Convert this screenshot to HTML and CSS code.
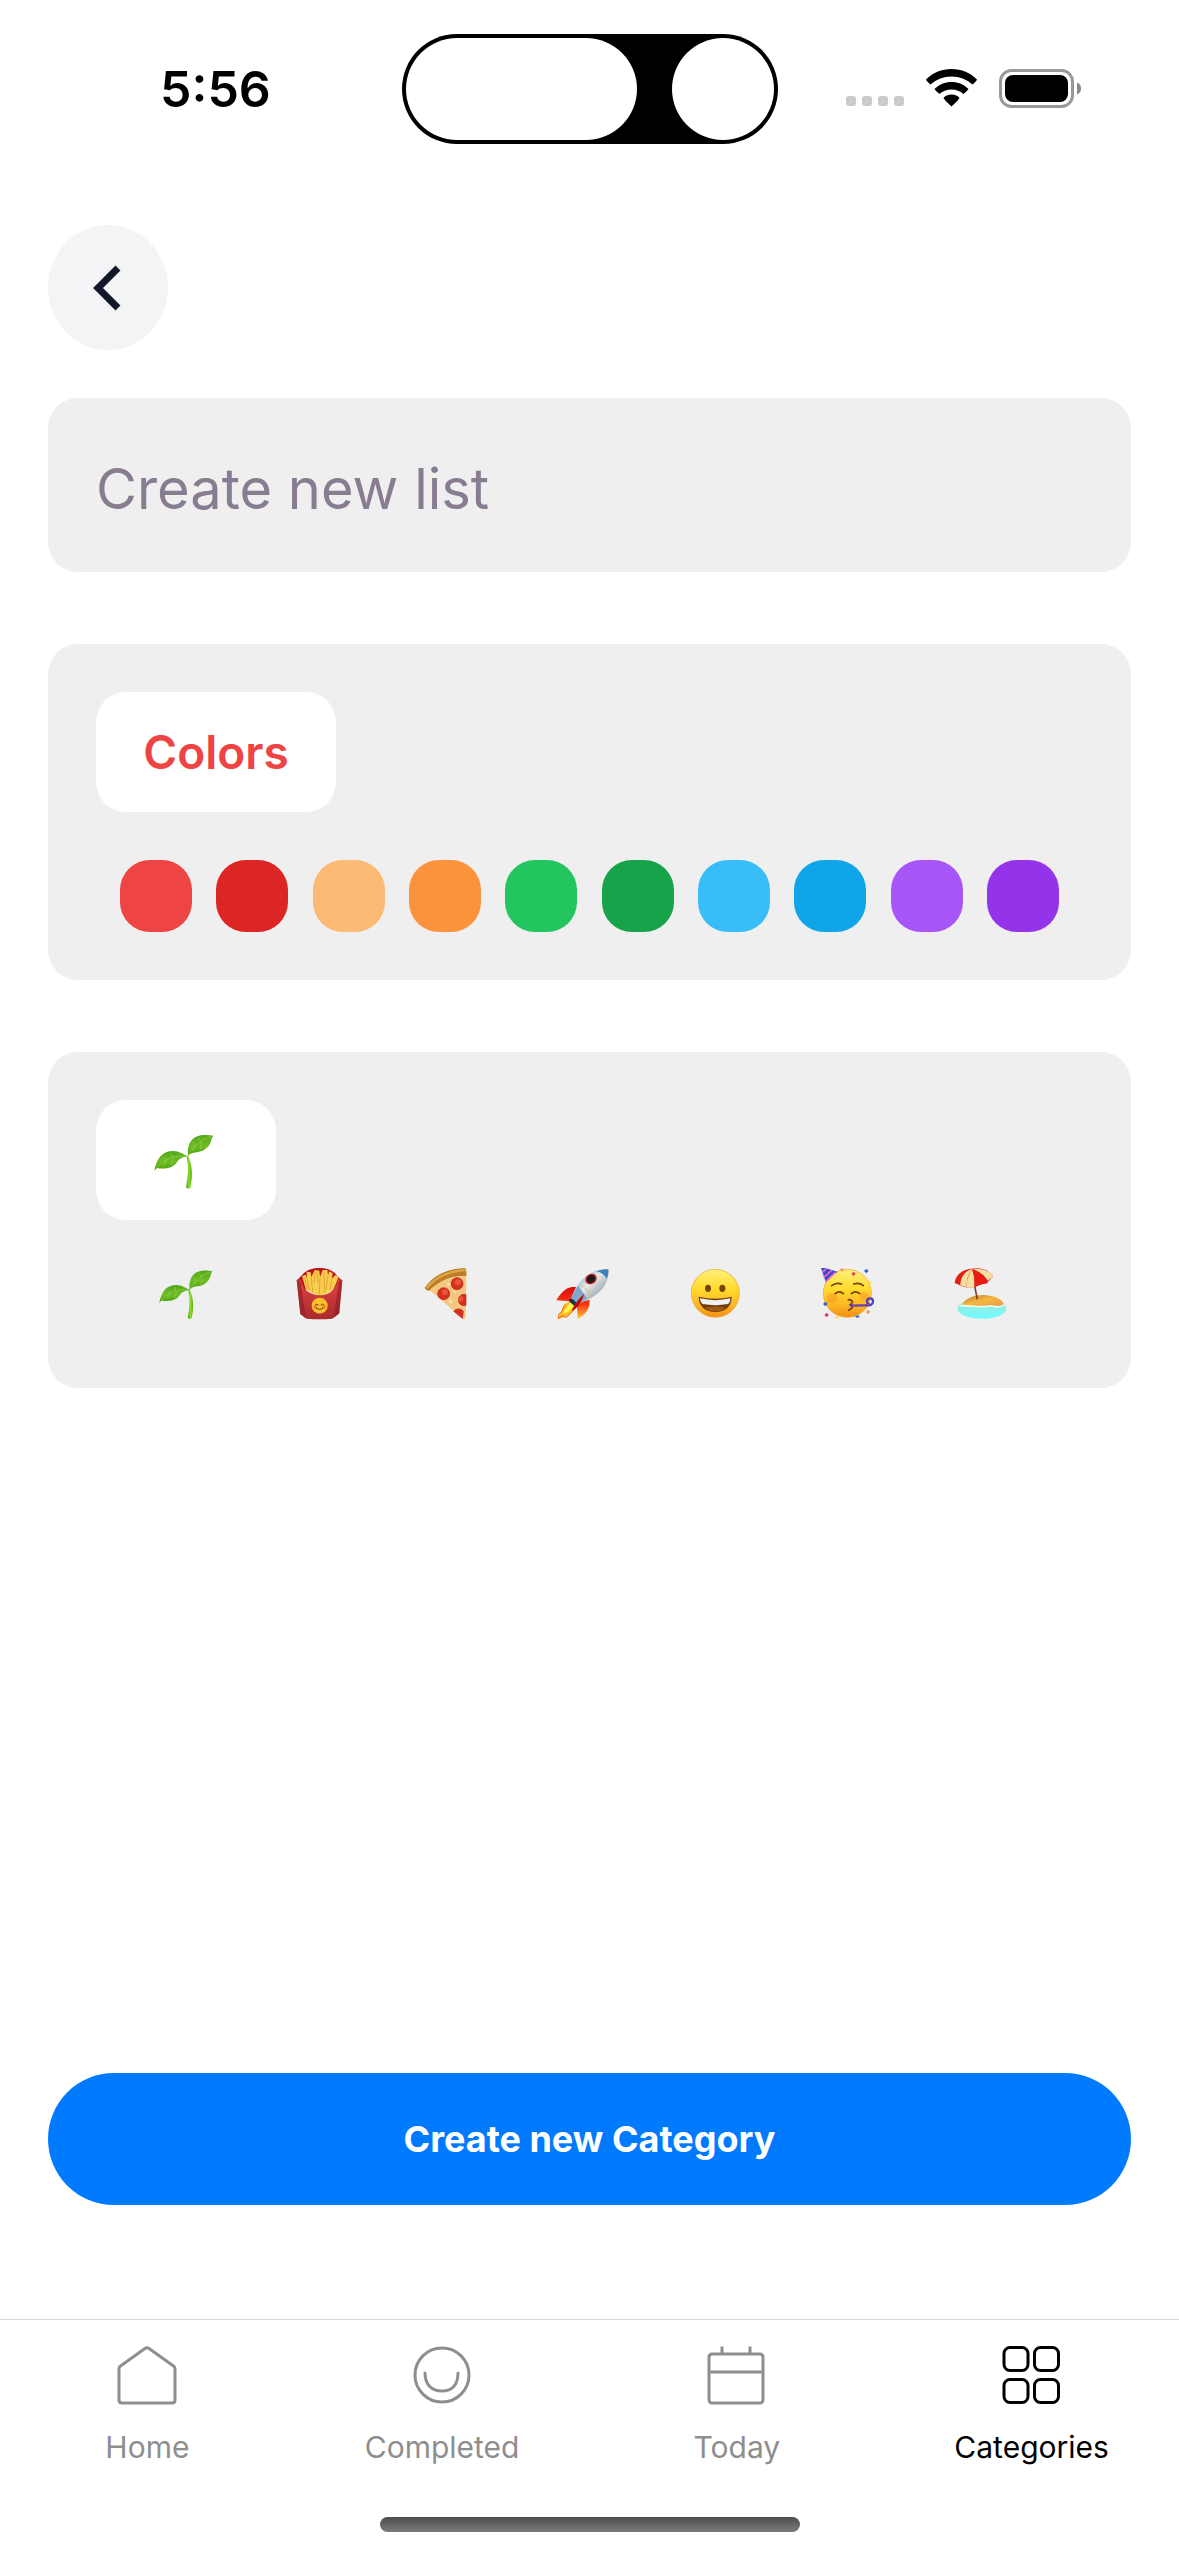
FILE: index.html
```html
<!DOCTYPE html>
<html lang="en">
<head>
<meta charset="utf-8">
<meta name="viewport" content="width=device-width, initial-scale=1">
<title>Create new Category</title>
<link rel="stylesheet" href="styles.css">
</head>
<body>
<svg class="defs" width="0" height="0" aria-hidden="true">
  <defs>
    <linearGradient id="leaf" x1="0" y1="0" x2="0" y2="1"><stop offset="0" stop-color="#55a81c"/><stop offset=".55" stop-color="#6dbd22"/><stop offset="1" stop-color="#48990f"/></linearGradient>
    <linearGradient id="stem" x1="0" y1="0" x2="1" y2="0"><stop offset="0" stop-color="#4f9f0c"/><stop offset=".5" stop-color="#8add2a"/><stop offset="1" stop-color="#58ae12"/></linearGradient>
    <linearGradient id="face" x1="0" y1="0" x2="0" y2="1"><stop offset="0" stop-color="#fff07c"/><stop offset=".4" stop-color="#ffdc2e"/><stop offset=".75" stop-color="#fdb622"/><stop offset="1" stop-color="#f08f12"/></linearGradient>
    <linearGradient id="box" x1="0" y1="0" x2="0" y2="1"><stop offset="0" stop-color="#e04444"/><stop offset="1" stop-color="#a92a2e"/></linearGradient>
    <linearGradient id="hull" x1="0" y1="0" x2="1" y2="1"><stop offset="0" stop-color="#4f8fc6"/><stop offset=".45" stop-color="#e6e9e8"/><stop offset=".7" stop-color="#a9b3b8"/><stop offset="1" stop-color="#3f6c96"/></linearGradient>
    <linearGradient id="fin" x1="0" y1="0" x2="0" y2="1"><stop offset="0" stop-color="#d80f0a"/><stop offset=".55" stop-color="#f93714"/><stop offset="1" stop-color="#ffd23a"/></linearGradient>
    <linearGradient id="sand" x1="0" y1="0" x2="1" y2="1"><stop offset="0" stop-color="#b5793a"/><stop offset=".5" stop-color="#f6b83e"/><stop offset="1" stop-color="#e39a52"/></linearGradient>
    <linearGradient id="sea" x1="0" y1="0" x2="0" y2="1"><stop offset="0" stop-color="#a8e4d4"/><stop offset="1" stop-color="#6ffcff"/></linearGradient>
    <symbol id="seedling" viewBox="372 316 180 166">
      <path fill="url(#stem)" d="M470 384C476 410 475 440 468 475Q474 483 481 476C487 450 490 412 474 380Z"/>
      <path fill="url(#leaf)" d="M373 426C380 385 400 365 430 366C448 366 460 376 474 382C456 384 448 390 441 400C426 422 398 420 380 417Z"/>
      <path fill="url(#leaf)" d="M474 382C470 345 484 323 515 318C530 317 540 319 550 320L545 328C542 355 520 368 500 370C488 371 480 374 474 382Z"/>
      <path fill="none" stroke="#95d057" stroke-width="2" d="M378 420C402 388 440 376 470 383M475 378C490 350 515 332 545 321M400 412L408 394L402 384M424 408L430 388L424 374M490 366L494 350L488 340M512 362L514 342L506 326"/>
    </symbol>
  </defs>
</svg>

<header class="status">
  <time class="clock">5:56</time>
  <div class="island"><span class="island-pill"></span><span class="island-dot"></span></div>
  <div class="signals">
    <svg class="cell" width="58" height="36" viewBox="0 0 58 36" fill="#cbcbcb" aria-hidden="true"><rect y="26" width="10" height="10" rx="3"/><rect x="16" y="26" width="10" height="10" rx="3"/><rect x="32" y="26" width="10" height="10" rx="3"/><rect x="48" y="26" width="10" height="10" rx="3"/></svg>
    <svg width="51" height="38" viewBox="0 0 51 38" aria-label="Wi-Fi" role="img"><path d="M25.500 0C35.500 0 44.500 4 51 10.500Q50.500 12 46.500 15.500Q37.500 7.500 25.500 7.500T4.500 15.500Q.5 12 0 10.500C6.500 4 15.500 0 25.500 0ZM25.500 13C32 13 38 15.500 42.500 20Q41.500 22 37.500 25Q32.500 20.500 25.500 20.500T13.500 25Q9.500 22 8.500 20C13 15.500 19 13 25.500 13ZM25.500 25.500C29 25.500 32 27 33.500 29Q33 30.500 25.500 37.500Q18 30.500 17.500 29C19 27 22 25.500 25.500 25.500Z"/></svg>
    <svg width="82" height="39" viewBox="0 0 82 39" aria-label="Battery" role="img"><rect x="1.500" y="1.500" width="72" height="36" rx="11" fill="none" stroke="#999" stroke-width="3"/><rect x="6" y="6" width="63" height="27" rx="8"/><path fill="#8a8a8a" d="M78 13.500Q82 15 82 19.500T78 25.500Z"/></svg>
  </div>
</header>

<main class="screen">
  <button class="back" type="button" aria-label="Back"><svg width="32" height="48" viewBox="0 0 32 48" fill="none" stroke="#111827" stroke-width="7" aria-hidden="true"><path d="M26 4L6 24L26 44"/></svg></button>

  <input class="name" type="text" placeholder="Create new list" aria-label="Category name">

  <section class="card" aria-label="Colors">
    <div class="chip chip-color">Colors</div>
    <div class="swatches">
      <button type="button" class="swatch red" aria-label="Red"></button>
      <button type="button" class="swatch red-dark" aria-label="Dark red"></button>
      <button type="button" class="swatch peach" aria-label="Light orange"></button>
      <button type="button" class="swatch orange" aria-label="Orange"></button>
      <button type="button" class="swatch green" aria-label="Green"></button>
      <button type="button" class="swatch green-dark" aria-label="Dark green"></button>
      <button type="button" class="swatch sky" aria-label="Sky blue"></button>
      <button type="button" class="swatch blue" aria-label="Blue"></button>
      <button type="button" class="swatch purple" aria-label="Purple"></button>
      <button type="button" class="swatch violet" aria-label="Violet"></button>
    </div>
  </section>

  <section class="card" aria-label="Icons">
    <div class="chip chip-icon"><svg width="60" height="56" role="img" aria-label="Seedling"><use href="#seedling"/></svg></div>
    <div class="emojis">
      <button type="button" class="emoji" aria-label="Seedling"><svg viewBox="0 0 54 54"><use href="#seedling" width="54" height="54"/></svg></button>
      <button type="button" class="emoji" aria-label="Fries"><svg viewBox="66 84 162 162">
        <path fill="#bb1519" d="M80 120C96 112 100 84 148 84S200 112 216 120L200 150H96Z"/>
        <path fill="#f9ce4e" d="M96 108L108 104L112 120L110 95L122 97L124 112L134 90L148 92L150 112L158 90L172 90L174 106L178 94L188 100L186 116L196 105L206 110L190 150L150 170L108 150Z"/>
        <path fill="none" stroke="#d9912b" stroke-width="2" d="M112 120L118 150M124 112L128 158M136 96L132 130M150 112L148 162M162 92L164 158M174 106L168 150M186 116L180 150M104 112L112 146M141 94L144 130"/>
        <path fill="url(#box)" d="M80 120L92 118C98 150 120 165 148 166S198 150 204 118L217 120L208 220L186 236Q148 239 110 236L91 222Z"/>
        <path fill="#8f1f26" d="M80 120L91 122L108 236L91 222ZM217 120L207 122L190 235L207 221Z" opacity=".65"/>
        <circle cx="149" cy="197" r="24" fill="#fcc02c"/><circle cx="136" cy="201" r="6" fill="#f58a2b"/><circle cx="162" cy="201" r="6" fill="#f58a2b"/>
        <path fill="none" stroke="#63380e" stroke-width="3" stroke-linecap="round" d="M136 195Q141 189 145 195M153 195Q158 189 162 195M139 204Q149 213 159 204"/>
      </svg></button>
      <button type="button" class="emoji" aria-label="Pizza"><svg viewBox="462 84 162 162">
        <path fill="#f4c780" d="M476 148Q520 104 589 102L587 230L582 239Z"/>
        <path fill="#bb7b27" d="M464 143C492 104 532 86 584 84Q590 84 589 108C550 104 505 122 478 152Q468 152 464 143Z"/>
        <path fill="none" stroke="#dca545" stroke-width="8" stroke-linecap="round" d="M472 141Q512 96 584 90"/>
        <g fill="#d8301f" stroke="#b22317" stroke-width="2"><circle cx="561" cy="131" r="18"/><circle cx="521" cy="161" r="18"/><path d="M588 164A17 17 0 1 0 588 196ZM551 214A18 18 0 0 1 580 214L577 235Z"/></g>
        <g fill="#e8553b"><circle cx="564" cy="127" r="9"/><circle cx="525" cy="157" r="9"/><circle cx="572" cy="177" r="8"/></g>
        <path fill="#fbe2a8" d="M540 178l9 5l-5 8l-9-6zM530 132l10-5l2 7l-8 5zM551 152l9 3l-6 6z"/>
      </svg></button>
      <button type="button" class="emoji" aria-label="Rocket"><svg viewBox="861 84 162 162">
        <path fill="url(#fin)" d="M921 141C900 140 884 144 862 181L906 184ZM962 180C963 205 952 222 926 238L924 198L940 184Z"/>
        <path fill="#ffb91f" d="M904 182L888 192C878 206 875 220 867 236C884 233 900 228 912 216L922 200Z"/>
        <path fill="#fff352" d="M904 187L888 208L882 222L898 216L914 199Z"/>
        <path fill="none" stroke="#f16a0f" stroke-width="3" d="M887 194L879 214L870 222L868 236L880 228L893 232L908 217"/>
        <path fill="url(#hull)" d="M1018 88C974 84 928 112 907 174L923 191C976 178 1024 140 1018 88Z"/>
        <path fill="#3d7fbd" d="M1018 88C1004 86 990 90 981 94Q1001 96 1013 116Q1020 102 1018 88Z"/>
        <path fill="#81a8cc" d="M927 136L907 174L923 191L955 176Z"/>
        <path fill="#192e48" d="M902 176L912 178L922 188L916 197L900 184Z"/>
        <path fill="#b40804" d="M945 161C932 174 914 194 908 214C923 205 938 190 945 161Z"/>
        <ellipse cx="966" cy="117" rx="18" ry="15" fill="#d11918" transform="rotate(-35 966 117)"/><ellipse cx="966" cy="117" rx="13" ry="11" fill="#1a1a20" transform="rotate(-35 966 117)"/>
        <path stroke="#dfad3c" stroke-width="2" fill="none" d="M932 134Q952 142 968 168"/>
      </svg></button>
      <button type="button" class="emoji" aria-label="Grinning face"><svg viewBox="147 84 162 162">
        <circle cx="226" cy="160" r="72" fill="url(#face)" stroke="#eda029" stroke-width="2"/>
        <ellipse cx="204" cy="145" rx="9" ry="11" fill="#774305"/><ellipse cx="247" cy="145" rx="9" ry="11" fill="#774305"/>
        <path fill="#733d0b" d="M176 170Q226 182 275 170C276 199 256 216 226 216S176 199 176 170Z"/>
        <path fill="#eef2f6" d="M180 175Q226 186 271 175Q271 188 264 192Q226 199 188 192Q181 188 180 175Z"/>
        <path fill="#9b5b17" d="M194 203Q226 196 258 203Q244 214 226 214T194 203Z"/>
      </svg></button>
      <button type="button" class="emoji" aria-label="Partying face"><svg viewBox="543 84 162 162">
        <circle cx="622" cy="160" r="72" fill="url(#face)" stroke="#eda029" stroke-width="2"/>
        <circle cx="576" cy="174" r="16" fill="#fb8b2b" opacity=".45"/><circle cx="672" cy="170" r="14" fill="#fb8b2b" opacity=".45"/>
        <path fill="#3948cf" d="M543 84L556 84L594 96Q570 102 558 128Z"/>
        <path stroke="#ee62c4" stroke-width="5" d="M547 97L559 86M551 112L575 91M558 124L586 97" fill="none"/>
        <path fill="none" stroke="#76420c" stroke-width="5" stroke-linecap="round" d="M575 137Q588 126 605 132M641 132Q658 127 670 137M586 161Q598 150 610 161M634 161Q647 150 659 161M625 179Q646 182 631 194Q648 198 626 211"/>
        <path fill="none" stroke="#4a43bb" stroke-width="7" d="M630 197L676 196Q699 198 699 184A9 9 0 1 0 689 193"/>
        <path fill="none" stroke="#d73d78" stroke-width="4" stroke-dasharray="6 8" d="M640 197L690 193"/>
        <g fill="#e23d65"><path d="M640 95l7 6l-6 7l-7-5zM560 218l7 7l-7 7l-7-7z"/></g><g fill="#2e68d2"><path d="M679 86l7 7l-7 7l-7-7zM556 185l7 7l-7 7l-7-7zM645 228l12-2l1 6l-9 1z"/></g><g fill="#f59a3c"><path d="M605 84l7 5l-5 6l-7-5zM684 209l7 7l-7 6l-6-6z"/></g><g fill="#fce253"><path d="M690 122l6 6l-5 6l-6-5zM591 225l6 6l-6 6l-6-5z"/></g>
      </svg></button>
      <button type="button" class="emoji" aria-label="Beach with umbrella"><svg viewBox="942 84 162 162">
        <ellipse cx="1026" cy="206" rx="73" ry="30" fill="url(#sea)"/>
        <path fill="#e8fff4" d="M962 196C976 176 1000 164 1030 165C1066 165 1088 180 1094 194C1078 208 1064 200 1048 200C1030 205 1000 199 962 200Z"/>
        <path fill="url(#sand)" d="M965 194C978 174 1003 165 1030 165C1064 166 1088 178 1091 192C1080 202 1064 196 1046 196C1026 200 1000 195 965 194Z"/>
        <path fill="none" stroke="#854318" stroke-width="5" d="M1002 128L1012 178"/>
        <path fill="#e41d17" d="M944 129C948 100 972 87 996 86C1025 82 1050 92 1059 110L1040 129Q1020 133 1001 142L975 142Z"/>
        <path fill="#f3e0a0" d="M996 87C976 92 962 110 961 135L979 142Q980 108 996 87ZM996 87C1022 84 1052 92 1059 110L1043 122Q1030 98 996 87Z"/>
        <path fill="#f3e0a0" d="M996 87Q980 112 979 142L1003 142Q1006 112 996 87Z"/>
        <path fill="#e41d17" d="M996 87Q1006 112 1003 142Q1022 131 1044 129Q1032 100 996 87Z"/>
      </svg></button>
    </div>
  </section>

  <button class="submit" type="button">Create new Category</button>
</main>

<nav class="tabs" aria-label="Main">
  <a class="tab" href="#home"><svg viewBox="0 0 60 60"><path d="M28 3.500Q30 2 32 3.500L56.500 21Q58 22 58 24V55Q58 58 55 58H5Q2 58 2 55V24Q2 22 3.500 21Z"/></svg>Home</a>
  <a class="tab" href="#completed"><svg viewBox="0 0 60 60"><circle cx="30" cy="30" r="27"/><path stroke-linecap="round" d="M13 28C13 40 20 46 30 46S46 40 46 28"/></svg>Completed</a>
  <a class="tab" href="#today"><svg viewBox="0 0 60 60"><rect x="2" y="9" width="54" height="49" rx="3"/><path d="M2 27H56M15 1.500V9M43 1.500V9"/></svg>Today</a>
  <a class="tab active" href="#categories" aria-current="page"><svg viewBox="0 0 60 60"><rect x="2" y="2.500" width="24" height="23" rx="6"/><rect x="32.500" y="2.500" width="24" height="23" rx="6"/><rect x="2" y="34.500" width="24" height="23" rx="6"/><rect x="32.500" y="34.500" width="24" height="23" rx="6"/></svg>Categories</a>
</nav>
<div class="home-indicator"></div>
</body>
</html>
```
FILE: styles.css
```css
* {
  box-sizing: border-box;
}

body {
  margin: 0;
  min-height: 100vh;
  display: flex;
  flex-direction: column;
  background: #fff;
  color: #000;
  font-family: Inter, "Liberation Sans", sans-serif;
}

button {
  border: 0;
  padding: 0;
  font: inherit;
  cursor: pointer;
}

svg {
  display: block;
}

.defs {
  position: absolute;
}

/* Status bar */
.status {
  display: grid;
  grid-template-columns: 1fr 376px 1fr;
  align-items: center;
  padding-top: 34px;
}

.clock {
  padding-left: 160px;
  font-size: 50px;
  line-height: 60px;
  font-weight: 600;
}

.island {
  display: flex;
  justify-content: space-between;
  height: 110px;
  padding: 4px;
  border-radius: 55px;
  background: #000;
}

.island-pill,
.island-dot {
  border-radius: 51px;
  background: #fff;
}

.island-pill {
  width: 231px;
}

.island-dot {
  width: 102px;
}

.signals {
  display: flex;
  justify-content: flex-end;
  align-items: center;
  gap: 22px;
  padding: 0 98px 2px 0;
}

/* Form */
.screen {
  flex: 1;
  display: flex;
  flex-direction: column;
  padding: 81px 48px 114px;
}

.back {
  display: flex;
  align-items: center;
  justify-content: center;
  width: 120px;
  height: 125px;
  margin-bottom: 48px;
  border-radius: 50%;
  background: #f3f4f6;
}

.name {
  width: 100%;
  height: 174px;
  margin-bottom: 72px;
  padding: 8px 48px 0;
  border: 0;
  border-radius: 30px;
  background: #efefef;
  color: #000;
  font: 400 56px/72px Inter, "Liberation Sans", sans-serif;
}

.name::placeholder {
  color: #887c90;
  opacity: 1;
}

.card {
  display: flex;
  flex-direction: column;
  align-items: flex-start;
  gap: 48px;
  margin-bottom: 72px;
  padding: 48px;
  border-radius: 30px;
  background: #efefef;
}

.chip {
  display: flex;
  align-items: center;
  justify-content: center;
  height: 120px;
  border-radius: 30px;
  background: #fff;
}

.chip-color {
  width: 240px;
  color: #ef4444;
  font-size: 46px;
  line-height: 60px;
  font-weight: 600;
}

.chip-icon {
  width: 180px;
  padding: 4px 4px 0 0;
}

.swatches {
  display: flex;
  justify-content: space-between;
  width: 100%;
  padding: 0 24px;
}

.swatch {
  width: 72px;
  height: 72px;
  border-radius: 30px;
}

.red { background: #ef4444; }
.red-dark { background: #dc2626; }
.peach { background: #fdba74; }
.orange { background: #fb923c; }
.green { background: #22c55e; }
.green-dark { background: #16a34a; }
.sky { background: #38bdf8; }
.blue { background: #0ea5e9; }
.purple { background: #a855f7; }
.violet { background: #9333ea; }

.emojis {
  display: grid;
  grid-template-columns: repeat(7, 1fr);
  width: 100%;
  padding: 0 36px 0 24px;
}

.emoji {
  display: flex;
  justify-content: center;
  align-items: flex-start;
  height: 72px;
  background: none;
}

.emoji svg {
  width: 54px;
  height: 54px;
}

.submit {
  height: 132px;
  margin-top: auto;
  border-radius: 66px;
  background: #007aff;
  color: #fff;
  font-size: 36px;
  line-height: 48px;
  font-weight: 700;
}

/* Tab bar */
.tabs {
  display: grid;
  grid-template-columns: repeat(4, 1fr);
  padding: 25px 0 52px;
  border-top: 1px solid #d8d8d8;
}

.tab {
  display: flex;
  flex-direction: column;
  align-items: center;
  gap: 24px;
  color: #8e8e8f;
  font-size: 30px;
  line-height: 36px;
  text-decoration: none;
}

.tab.active {
  color: #000;
}

.tab svg {
  width: 60px;
  height: 60px;
  fill: none;
  stroke: currentColor;
  stroke-width: 3;
}

.home-indicator {
  width: 420px;
  height: 15px;
  margin: 0 auto 24px;
  border-radius: 8px;
  background: linear-gradient(#4c4c4c, #7c7c7c);
}
```
